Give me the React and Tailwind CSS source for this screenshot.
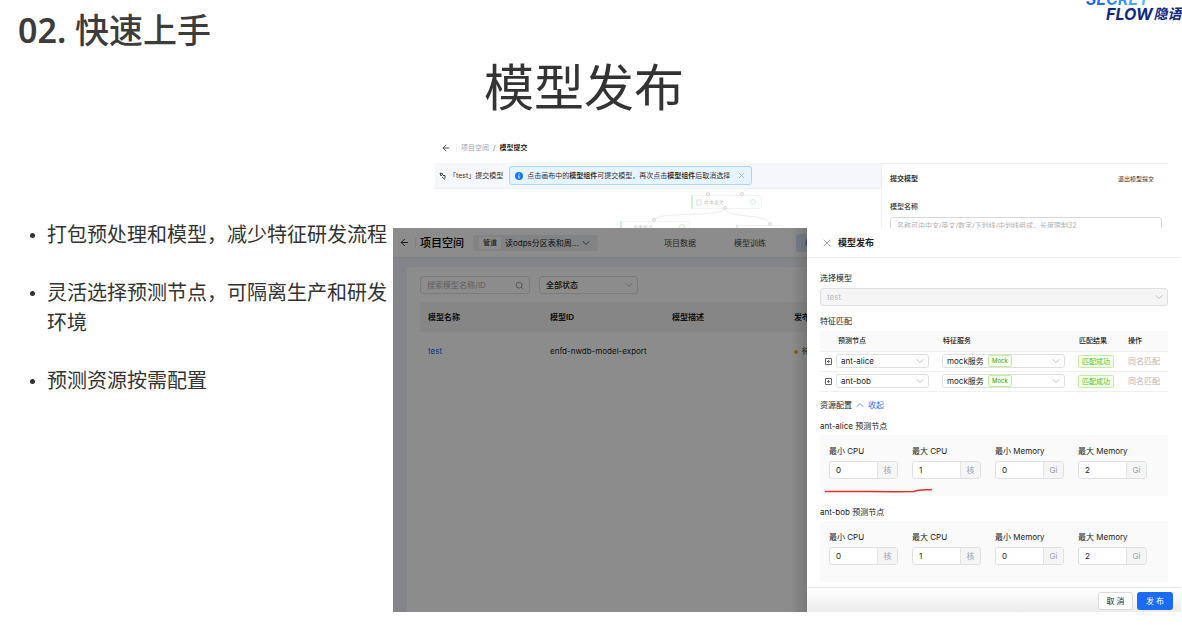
import { ArrowLeft, ChevronDown, ChevronUp, Search, X } from "lucide-react"

const notes = [
    "打包预处理和模型，减少特征研发流程",
    "灵活选择预测节点，可隔离生产和研发环境",
    "预测资源按需配置"
]

const resources = [
    { label: "最小 CPU", value: "0", unit: "核" },
    { label: "最大 CPU", value: "1", unit: "核" },
    { label: "最小 Memory", value: "0", unit: "Gi" },
    { label: "最大 Memory", value: "2", unit: "Gi" }
]

const nodes = ["ant-alice", "ant-bob"]

function Select({ label, options, className, disabled, children }) {
    return (
        <div className="relative flex items-center">
            <select aria-label={label} disabled={disabled} className={`w-full appearance-none rounded-[3px] border border-[#e0e0e0] outline-none ${className}`}>
                {options.map((option) => <option key={option}>{option}</option>)}
            </select>
            {children}
            <ChevronDown size={12} strokeWidth={1.5} className="pointer-events-none absolute right-[3px] text-[#aaa]" />
        </div>
    )
}

function Logo() {
    return (
        <div className="flex h-[26px] w-[96px] flex-col justify-end overflow-hidden font-bold italic leading-none">
            <span className="w-fit bg-linear-to-r from-[#1f4fff] to-[#5cc8ff] bg-clip-text pr-1 text-[16px] leading-[14px] text-transparent">SECRET</span>
            <div className="flex items-center whitespace-nowrap pl-5 text-[#10297f]">
                <span className="text-[16px]">FLOW</span>
                <span className="ml-px text-[14px]">隐语</span>
            </div>
        </div>
    )
}

function CanvasGraph() {
    return (
        <svg className="ml-[180px] block h-[39px] w-[170px]" viewBox="0 0 170 39" fill="none" stroke="#ededed">
            <path d="M110 19C110 29 39 22 39 31M110 19C110 30 155 24 155 35" />
            <rect x="77.5" y="6.5" width="69" height="13" rx="1" fill="#fff" stroke="#f3f3f3" />
            <rect x="5.5" y="32.5" width="69" height="13" rx="1" fill="#fff" stroke="#f3f3f3" />
            <rect x="122.5" y="36.5" width="46" height="13" rx="1" fill="#fff" stroke="#f3f3f3" />
            <path d="M77 6V20M6 32V39M122 36V39" stroke="#c5edc9" strokeWidth="1.5" />
            <rect x="82" y="11" width="4" height="5" stroke="#dcdce6" />
            <circle cx="138" cy="13" r="2.5" stroke="#cdeed1" />
            <circle cx="67" cy="38" r="2.5" stroke="#cdeed1" />
            <text x="89" y="15" fontSize="5" fill="#c4c4c4" stroke="none">样本表关</text>
            <text x="18" y="40" fontSize="5" fill="#c4c4c4" stroke="none">全表统计</text>
            <g fill="#fff" stroke="#d4d4d4">
                <circle cx="93" cy="5" r="1.5" />
                <circle cx="127" cy="5" r="1.5" />
                <circle cx="110" cy="19" r="1.5" />
                <circle cx="39" cy="31" r="1.5" />
                <circle cx="155" cy="35" r="1.5" />
            </g>
        </svg>
    )
}

function SubmitWindow() {
    return (
        <section className="ml-[42px] mr-[13px] h-[90px] overflow-hidden text-[7px] leading-[10px] text-[#333]">
            <nav className="flex h-[25px] items-center pb-[5px] pl-[6px]">
                <ArrowLeft size={10} />
                <span className="ml-[5px] h-2 w-px bg-gray-100"></span>
                <a href="#" className="ml-1 text-gray-400">项目空间</a>
                <span className="mx-1 text-gray-500">/</span>
                <span className="font-medium text-black">模型提交</span>
            </nav>
            <div className="flex">
                <div className="min-w-0 flex-1">
                    <div className="flex h-[26px] items-center whitespace-nowrap border-b border-[#eef0f3] bg-[#f5f7fa] pl-1">
                        <svg className="size-2" viewBox="0 0 8 8" fill="none" stroke="#444">
                            <path d="M1 1l3 1-2 2zM4 3.500h2v3M3 5l3 2.500" />
                        </svg>
                        <span className="ml-[2px]">「test」提交模型</span>
                        <div className="ml-[6px] flex h-[19px] w-[243px] items-center rounded-[3px] border border-[#a9d5fb] bg-[#e6f4ff] px-[5px]">
                            <svg className="size-2" viewBox="0 0 8 8">
                                <circle cx="4" cy="4" r="4" fill="#1677ff" />
                                <path d="M4 1.5v1M4 3.5v3" stroke="#fff" />
                            </svg>
                            <p className="ml-[4px] flex-1">
                                点击画布中的<b>模型组件</b>可提交模型，再次点击<b>模型组件</b>后取消选择
                            </p>
                            <button aria-label="关闭提示"><X size={9} className="text-gray-400" /></button>
                        </div>
                    </div>
                    <CanvasGraph />
                </div>
                <div className="w-[287px] shrink-0 border-l border-t border-[#f0f0f0] pl-2 pr-[6px]">
                    <div className="flex h-[29px] items-center justify-between pr-2">
                        <h3 className="font-bold">提交模型</h3>
                        <button className="text-[6px]">退出模型提交</button>
                    </div>
                    <label htmlFor="modelName" className="mt-[9px] block font-medium">模型名称</label>
                    <input id="modelName" placeholder="名称可由中文/英文/数字/下划线/中划线组成，长度限制32" className="mt-[5px] h-4 w-full rounded-[3px] border border-[#d9d9d9] px-[6px] placeholder:text-[#b0b0b0]" />
                </div>
            </div>
        </section>
    )
}

function ProjectPage() {
    return (
        <div className="relative min-w-0 flex-1 overflow-hidden bg-[#f0f3f7] text-[8px] leading-3 text-[#222]">
            <header className="flex h-[30px] items-center whitespace-nowrap border-b border-[#e8e8e8] bg-white pl-[6px]">
                <ArrowLeft size={11} className="shrink-0" />
                <span className="ml-[5px] h-[10px] w-px shrink-0 bg-gray-200"></span>
                <h3 className="ml-[4px] shrink-0 text-[11px] font-medium text-black">项目空间</h3>
                <button className="ml-[9px] flex h-4 w-[125px] shrink-0 items-center rounded-[3px] bg-[#eceef3] px-[6px]">
                    <span className="rounded-[2px] bg-white px-1 text-[7px]">管道</span>
                    <span className="ml-1 flex-1 text-left">读odps分区表和周...</span>
                    <ChevronDown size={12} strokeWidth={1.5} />
                </button>
                <a href="#" className="ml-[66px] shrink-0 text-[#444]">项目数据</a>
                <a href="#" className="ml-[38px] shrink-0 text-[#444]">模型训练</a>
                <a href="#" className="ml-[30px] shrink-0 rounded-[3px] bg-[#dde9fb] px-[9px] py-[3px] text-[#1668f5]">模型管理</a>
            </header>
            <div className="ml-[14px] mt-[9px] h-[345px] rounded-tl-[4px] bg-white pl-[13px] pt-[9px]">
                <div className="flex gap-[9px]">
                    <div className="relative flex w-[110px] items-center">
                        <input aria-label="搜索" placeholder="搜索模型名称/ID" className="h-[18px] w-full rounded-[3px] border border-[#e0e0e0] px-[6px] placeholder:text-[#b0b0b0]" />
                        <Search size={9} className="absolute right-[6px] text-[#888]" />
                    </div>
                    <div className="w-[99px]">
                        <Select label="状态" options={["全部状态"]} className="h-[18px] px-[6px] font-medium" />
                    </div>
                </div>
                <table className="mt-2 w-[488px] table-fixed text-left">
                    <thead className="bg-[#f5f5f6]">
                        <tr className="h-[30px]">
                            <th className="pl-2 font-bold">模型名称</th>
                            <th className="pl-2 font-bold">模型ID</th>
                            <th className="pl-2 font-bold">模型描述</th>
                            <th className="pl-2 font-bold">发布状态</th>
                        </tr>
                    </thead>
                    <tbody>
                        <tr className="h-[38px]">
                            <td className="pl-2"><a href="#" className="text-[#1668f5]">test</a></td>
                            <td className="pl-2">enfd-nwdb-model-export</td>
                            <td></td>
                            <td className="pl-2">
                                <span className="mr-1 inline-block size-1 rounded-full bg-[#faad14] align-middle"></span>
                                待发布
                            </td>
                        </tr>
                    </tbody>
                </table>
            </div>
            <div className="absolute inset-0 bg-black/45"></div>
            <div className="absolute inset-y-0 right-0 w-4 bg-linear-to-r from-transparent to-black/15"></div>
        </div>
    )
}

function MatchTable() {
    return (
        <table className="mt-[4px] w-full table-fixed text-left text-[8px]">
            <thead className="bg-[#fafafa] text-[7px]">
                <tr className="h-5 border-b border-[#f0f0f0]">
                    <th className="w-[16px]"></th>
                    <th className="w-[106px] pl-[2px] font-medium">预测节点</th>
                    <th className="pl-px font-medium">特征服务</th>
                    <th className="w-[50px] pl-px font-medium">匹配结果</th>
                    <th className="w-[40px] font-medium">操作</th>
                </tr>
            </thead>
            <tbody>
                {nodes.map((node) => (
                    <tr key={node} className="h-5 border-b border-[#f0f0f0]">
                        <td className="pl-1">
                            <button aria-label={`展开 ${node}`} className="block">
                                <svg className="size-[9px]" viewBox="0 0 9 9" fill="none" stroke="#666">
                                    <path d="M1.5 1.5h6v6h-6zM3 4.5h3M4.5 3v3" />
                                </svg>
                            </button>
                        </td>
                        <td className="pr-[13px]">
                            <Select label="预测节点" options={[node]} className="h-[14px] px-1" />
                        </td>
                        <td className="pr-[13px]">
                            <Select label="特征服务" options={["mock服务"]} className="h-[14px] px-1">
                                <span className="pointer-events-none absolute left-[46px] rounded-[2px] border border-[#c4efa3] bg-[#f6ffed] px-[3px] text-[6px] leading-[10px] text-[#389e0d]">Mock</span>
                            </Select>
                        </td>
                        <td>
                            <span className="block w-fit whitespace-nowrap rounded-[2px] border border-[#c4efa3] bg-[#f6ffed] px-[3px] text-[7px] leading-[11px] text-[#52c41a]">匹配成功</span>
                        </td>
                        <td className="whitespace-nowrap">
                            <button disabled className="block text-[#b5b5b5]">同名匹配</button>
                        </td>
                    </tr>
                ))}
            </tbody>
        </table>
    )
}

function ResourcePanel({ node }) {
    return (
        <div className="flex h-[61px] gap-[14px] bg-[#fafafa] pl-[9px] pt-[10px]">
            {resources.map((res) => (
                <div key={res.label} className="w-[69px]">
                    <label htmlFor={node + res.label} className="block whitespace-nowrap leading-3">{res.label}</label>
                    <div className="mt-[4px] flex h-[18px] overflow-hidden rounded-[3px] border border-[#e0e0e0] bg-white">
                        <input id={node + res.label} defaultValue={res.value} className="w-full min-w-0 flex-1 px-[6px] outline-none" />
                        <span className="flex w-5 items-center justify-center border-l border-[#e4e4e4] bg-[#f5f5f5] text-gray-400">{res.unit}</span>
                    </div>
                </div>
            ))}
        </div>
    )
}

function PublishDrawer() {
    return (
        <aside className="flex w-[374px] shrink-0 flex-col bg-white text-[8px] leading-3 text-[#222]">
            <header className="flex h-[30px] items-center border-b border-[#f0f0f0] pl-[14px]">
                <button aria-label="关闭"><X size={12} strokeWidth={1.5} className="text-[#888]" /></button>
                <h3 className="ml-[5px] text-[9px] font-bold">模型发布</h3>
            </header>
            <div className="pl-[13px] pr-[13px] pt-[14px]">
                <h4>选择模型</h4>
                <div className="mt-[4px]">
                    <Select label="选择模型" options={["test"]} disabled className="h-[18px] bg-[#f5f5f5] px-[6px] text-[#bbb] opacity-100" />
                </div>
                <h4 className="mt-[9px]">特征匹配</h4>
                <MatchTable />
                <div className="mt-[7px] flex items-center">
                    <h4>资源配置</h4>
                    <button className="ml-[2px] flex items-center gap-[2px] text-[#1677ff]">
                        <ChevronUp size={12} strokeWidth={1.5} />
                        收起
                    </button>
                </div>
                <h4 className="mb-[3px] mt-[9px]">ant-alice 预测节点</h4>
                <div className="relative">
                    <ResourcePanel node="ant-alice" />
                    <svg className="absolute bottom-[3px] left-[4px] h-[6px] w-[110px]" viewBox="0 0 110 6" fill="none" stroke="#e5302d" strokeWidth="1.5">
                        <path d="M1 4.500C30 4 60 5 90 4.500C95 2.500 100 3 108 2.500" />
                    </svg>
                </div>
                <h4 className="mb-[3px] mt-[10px]">ant-bob 预测节点</h4>
                <ResourcePanel node="ant-bob" />
            </div>
            <footer className="mt-auto flex h-[25px] items-center justify-end gap-1 border-t border-[#e8e8e8] bg-linear-to-b from-white to-[#ececec] pr-2 pt-px">
                <button className="h-[18px] w-[35px] rounded-[3px] border border-[#d9d9d9] bg-white">取 消</button>
                <button className="h-[18px] w-9 rounded-[3px] bg-[#1b6bf3] text-white">发 布</button>
            </footer>
        </aside>
    )
}

function App() {
    return (
        <main className="min-h-screen bg-white font-['Inter','Noto_Sans_CJK_SC',sans-serif] text-[#333]">
            <header className="flex h-[58px] items-start justify-between pl-[18px]">
                <h1 className="mt-[6px] font-['Noto_Sans','Noto_Sans_CJK_SC',sans-serif] text-[34px] font-medium leading-[48px] text-[#3c3c3c]">
                    <span className="font-semibold">02.</span> 快速上手
                </h1>
                <div className="-mt-[4px]"><Logo /></div>
            </header>
            <h2 className="mr-[14px] text-center text-[50px] leading-[60px]">模型发布</h2>
            <div className="mt-5 flex">
                <ul className="mt-[82px] flex w-[393px] shrink-0 flex-col gap-7 pl-[30px] text-[20px] leading-[30px]">
                    {notes.map((note) => (
                        <li key={note} className="flex">
                            <span className="mt-[13px] size-[5px] shrink-0 rounded-full bg-[#333]"></span>
                            <p className="ml-3 w-[341px]">{note}</p>
                        </li>
                    ))}
                </ul>
                <div className="mr-px min-w-0 flex-1">
                    <SubmitWindow />
                    <section className="flex h-[384px]">
                        <ProjectPage />
                        <PublishDrawer />
                    </section>
                </div>
            </div>
        </main>
    )
}

export default App
